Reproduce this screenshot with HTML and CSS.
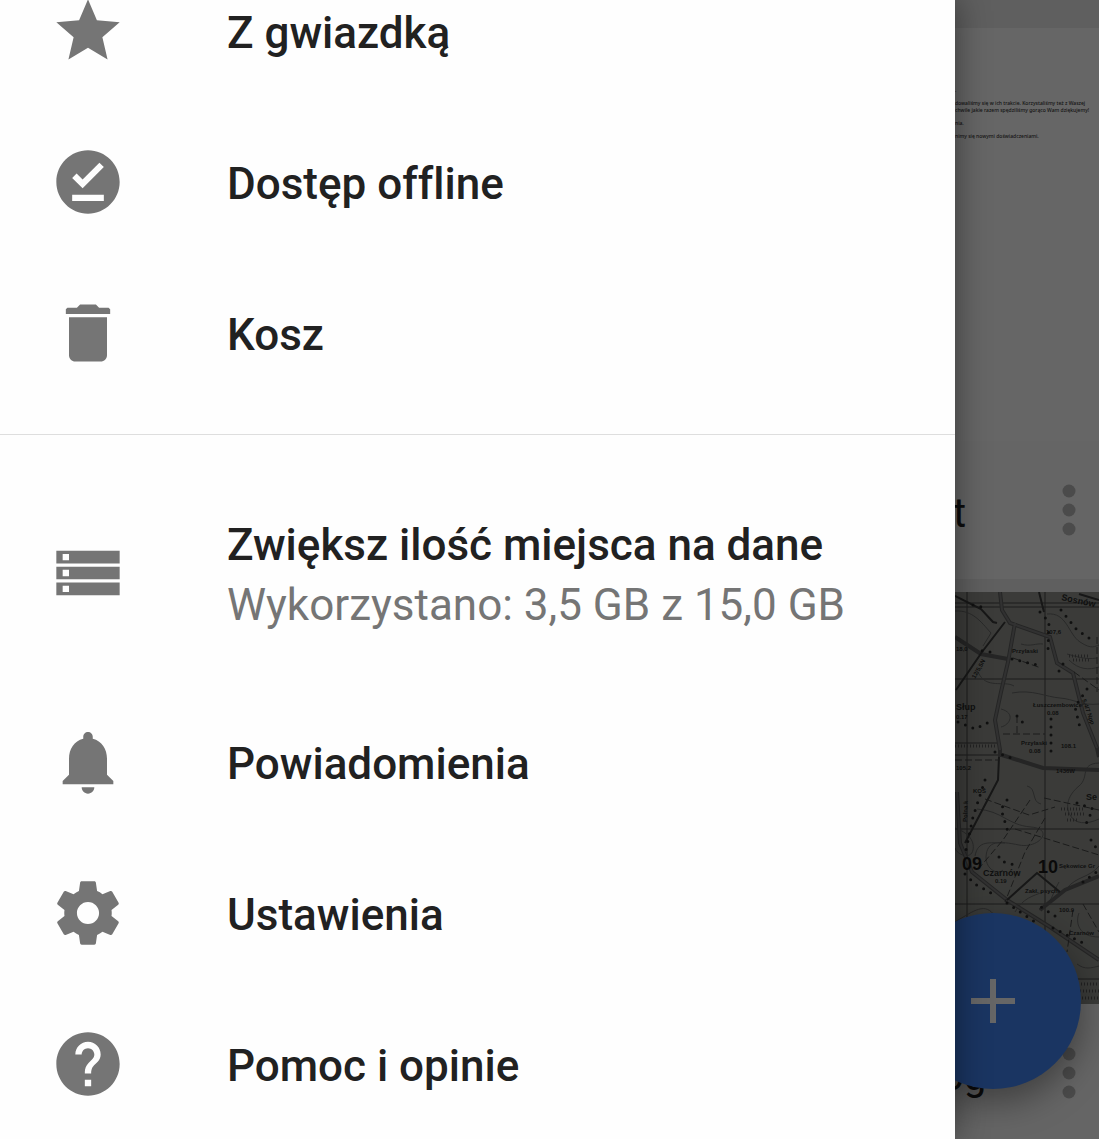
FILE: index.html
```html
<!DOCTYPE html>
<html lang="pl">
<head>
    <meta charset="utf-8">
    <meta name="viewport" content="width=device-width, initial-scale=1">
    <title>Menu</title>
    <link rel="stylesheet" href="styles.css">
</head>
<body>
    <nav class="drawer">
        <ul class="menu">
            <li>
                <a href="#" class="item">
                    <svg class="icon" viewBox="0 0 24 24"><path d="M12 17.27 18.18 21l-1.64-7.03L22 9.24l-7.19-.61L12 2 9.19 8.63 2 9.24l5.46 4.73L5.82 21z"/></svg>
                    <span class="label">Z gwiazdką</span>
                </a>
            </li>
            <li>
                <a href="#" class="item">
                    <svg class="icon" viewBox="0 0 24 24"><path d="M12 2C6.5 2 2 6.5 2 12s4.5 10 10 10 10-4.500 10-10S17.500 2 12 2zm5 16H7v-2h10v2zm-6.700-4L7 10.700l1.400-1.400 1.900 1.900 5.300-5.300L17 7.300 10.300 14z"/></svg>
                    <span class="label">Dostęp offline</span>
                </a>
            </li>
            <li>
                <a href="#" class="item">
                    <svg class="icon" viewBox="0 0 24 24"><path d="M6 19c0 1.100.9 2 2 2h8c1.100 0 2-.9 2-2V7H6v12zM18.500 4h-3l-1-1h-5l-1 1h-3l-.5.500V6h14V4.500z"/></svg>
                    <span class="label">Kosz</span>
                </a>
            </li>
        </ul>
        <ul class="menu more">
            <li>
                <a href="#" class="item storage">
                    <svg class="icon" viewBox="0 0 24 24"><path d="M2 19h20v-4H2v4zm2-3h2v2H4v-2zM2 5v4h20V5H2zm4 3H4V6h2v2zm-4 6h20v-4H2v4zm2-3h2v2H4v-2z"/></svg>
                    <span class="label">Zwiększ ilość miejsca na dane
                        <small class="usage">Wykorzystano: 3,5 GB z 15,0 GB</small>
                    </span>
                </a>
            </li>
            <li>
                <a href="#" class="item">
                    <svg class="icon" viewBox="0 0 24 24"><path d="M12 22c1.100 0 2-.9 2-2h-4c0 1.100.9 2 2 2zm6-6v-5c0-3.070-1.640-5.640-4.500-6.320V4c0-.83-.67-1.500-1.500-1.500s-1.500.67-1.500 1.500v.68C7.630 5.360 6 7.920 6 11v5l-2 2v1h16v-1l-2-2z"/></svg>
                    <span class="label">Powiadomienia</span>
                </a>
            </li>
            <li>
                <a href="#" class="item">
                    <svg class="icon" viewBox="0 0 24 24"><path d="M19.430 12.980c.04-.32.07-.64.07-.98s-.03-.66-.07-.98l2.110-1.650c.19-.15.24-.42.12-.64l-2-3.460c-.12-.22-.39-.3-.61-.22l-2.490 1c-.52-.4-1.080-.73-1.690-.98l-.38-2.650C14.460 2.180 14.250 2 14 2h-4c-.25 0-.46.18-.49.42l-.38 2.650c-.61.25-1.170.59-1.690.98l-2.490-1c-.23-.09-.49 0-.61.22l-2 3.460c-.13.22-.07.49.12.64l2.110 1.650c-.04.32-.07.65-.07.98s.03.66.07.98l-2.110 1.650c-.19.15-.24.42-.12.64l2 3.460c.12.22.39.3.61.22l2.490-1c.52.4 1.080.73 1.690.98l.38 2.650c.03.24.24.42.49.42h4c.25 0 .46-.18.49-.42l.38-2.650c.61-.25 1.170-.59 1.690-.98l2.490 1c.23.09.49 0 .61-.22l2-3.460c.12-.22.07-.49-.12-.64l-2.110-1.650zM12 15.500c-1.930 0-3.500-1.570-3.500-3.500s1.570-3.500 3.500-3.500 3.500 1.570 3.500 3.500-1.570 3.500-3.500 3.500z"/></svg>
                    <span class="label">Ustawienia</span>
                </a>
            </li>
            <li>
                <a href="#" class="item">
                    <svg class="icon" viewBox="0 0 24 24"><path d="M12 2C6.480 2 2 6.480 2 12s4.480 10 10 10 10-4.480 10-10S17.520 2 12 2zm1 17h-2v-2h2v2zm2.070-7.750-.9.92C13.450 12.900 13 13.500 13 15h-2v-.5c0-1.100.45-2.100 1.170-2.830l1.240-1.260c.37-.36.59-.86.59-1.410 0-1.100-.9-2-2-2s-2 .9-2 2H8c0-2.210 1.790-4 4-4s4 1.790 4 4c0 .88-.36 1.680-.93 2.250z"/></svg>
                    <span class="label">Pomoc i opinie</span>
                </a>
            </li>
        </ul>
    </nav>

    <main class="files">
        <article class="card">
            <div class="preview">
                <p>.</p>
                <p>dowaliśmy się w ich trakcie. Korzystaliśmy też z Waszej<br>chwile jakie razem spędziliśmy gorąco Wam dziękujemy!</p>
                <p>nia.</p>
                <p>nimy się nowymi doświadczeniami.</p>
            </div>
            <div class="caption">
                <span class="name">t</span>
                <button type="button" class="dots" aria-label="Więcej">
                    <svg viewBox="0 0 14 52"><circle cx="7" cy="7" r="6.500"/><circle cx="7" cy="26" r="6.500"/><circle cx="7" cy="45" r="6.500"/></svg>
                </button>
            </div>
        </article>
        <article class="card">
            <svg class="map" viewBox="0 0 144 412" preserveAspectRatio="xMinYMin slice">
                <!-- grid -->
                <g class="grid">
                    <path d="M12 0V412M90 0V340M0 11H144M0 15H144M0 87H144M0 151H42M0 163H44M0 237H144M0 312H144M100 387H144"/>
                </g>
                <!-- contours -->
                <g class="contour">
                    <path d="M92 22C112 20 113 42 125 50S140 54 144 53M0 19C18 18 26 30 36 41L28 54M66 52c10 3 15-1 22 0M57 101c20-4 34 4 48 5s22 8 39 6M23 80c8 18 26 8 36 14"/>
                    <path d="M46 117c15 4 9 16 0 18M144 171c-20 1-9 14-20 23s-14 20-9 29 16 10 29 4M22 217c26 2 30 16 54 18s8 22-12 18-32-5-33 12c0 13 12 18 17 13"/>
                    <path d="M0 236c12 4 20 12 18 22s-16 5-18-2M20 264c3-16 14-13 30-13M112 62c8 2 18 6 30 4M114 68c10 10 20 10 30 7M144 345c-20 0-24-14-20-24M96 408c12-20 20-10 24-28M122 372c8 6 14 4 22 2M60 320c8-14 18-16 28-20"/>
                    <path d="M104 290c-8 14-6 20-20 28M144 274c-10 12-22 10-32 22M0 330c20-12 30-20 40-6M72 194c10 2 4 16 14 18"/>
                </g>
                <!-- roads -->
                <g class="road">
                    <path d="M45 0 47 18 55 31 95 45 102 71 118 81 128 121 142 156 144 165"/>
                    <path d="M60 31 53 70 46 100 40 128 45 158V165"/>
                    <path d="M47 163 88 176 144 178M0 45 26 62 53 67"/>
                    <path d="M2 200 5 251 17 280 52 308 95 335 144 368M85 318 110 298 144 284"/>
                </g>
                <g class="roadcore">
                    <path d="M45 0 47 18 55 31 95 45 102 71 118 81 128 121 142 156M60 31 53 70 46 100 40 128 45 158M2 200 5 251 17 280 52 308 95 335 144 368"/>
                </g>
                <!-- railways and field paths -->
                <g class="rail">
                    <path d="M50 30 27 60 1 98M0 4 26 17 38 30 42 31M44 165 43 188 10 251M84 0 89 20M124 2 144 8"/>
                    <path d="M52 308 82 281 105 300"/>
                </g>
                <g class="dashed">
                    <path d="M0 168H44M30 207 74 223 100 215M75 208 48 248 25 275M48 142H90M62 124V142M58 66 86 76M119 80 144 98M142 45V100"/>
                    <path d="M89 206 144 218M60 237 144 263M118 318 112 360M128 312 144 340M90 226 70 260 50 310"/>
                </g>
                <!-- houses -->
                <g class="houses">
                    <path d="M40 160 62 168 M57 67 82 73 M62 124 70 133 M96 127 96 160"/>
                    <path d="M30 188 18 225 11 258 M35 60 22 58M3 130 20 137 34 130"/>
                    <path d="M44 265 46 269 60 273M52 311 80 330M98 336 130 352M10 282 20 292 38 302"/>
                    <path d="M106 18 122 38 140 50M132 97 120 115 126 140"/>
                    <path d="M85 20 94 30 93 58M108 72 104 79M122 211 138 217 130 234M136 248 144 260"/>
                    <path d="M52 208 46 217 53 240M128 290 144 278M100 324 86 315M18 13 31 16"/>
                </g>
                <g class="hatch">
                    <path d="M114 64H134M118 68H136M106 217H128M110 222H130M112 228H124M0 154H40M126 392H144M122 399H144M118 406H144"/>
                </g>
                <g class="places">
                    <text x="91" y="42">107,6</text>
                    <text x="57" y="61">Przylaski</text>
                    <text x="78" y="115">Łuszczembowice</text>
                    <text x="92" y="123">0.08</text>
                    <text x="66" y="153">Przylaski</text>
                    <text x="74" y="161">0.08</text>
                    <text x="106" y="156">108.1</text>
                    <text x="1" y="59">18,0</text>
                    <text x="1" y="127">0.17</text>
                    <text x="1" y="178">105.2</text>
                    <text x="18" y="201">KOŚ</text>
                    <text x="101" y="181">1436W</text>
                    <text x="40" y="291">0.19</text>
                    <text x="104" y="276">Sękowice Gr</text>
                    <text x="70" y="301">Zakł. psych.</text>
                    <text x="104" y="320">100.9</text>
                    <text x="114" y="343">Czarnów</text>
                    <text x="20" y="87" transform="rotate(-60 20 87)">12/5,5N</text>
                    <text x="127" y="108" transform="rotate(70 127 108)">5,4/7 Npp</text>
                    <text x="12" y="230" transform="rotate(-88 12 230)">Polna k</text>
                </g>
                <g class="towns">
                    <text x="1" y="118">Słup</text>
                    <text x="28" y="284">Czarnów</text>
                    <text x="131" y="208">Se</text>
                    <text x="106" y="8" transform="rotate(12 106 8)">Sosnów</text>
                </g>
                <g class="numbers">
                    <text x="7" y="278">09</text>
                    <text x="83" y="281">10</text>
                </g>
            </svg>
            <div class="caption">
                <span class="name long">og</span>
                <button type="button" class="dots" aria-label="Więcej">
                    <svg viewBox="0 0 14 52"><circle cx="7" cy="7" r="6.500"/><circle cx="7" cy="26" r="6.500"/><circle cx="7" cy="45" r="6.500"/></svg>
                </button>
            </div>
        </article>
        <button type="button" class="fab" aria-label="Dodaj">
            <svg viewBox="0 0 44 44"><path d="M19 0h6v19h19v6H25v19h-6V25H0v-6h19z"/></svg>
        </button>
    </main>
</body>
</html>
```

FILE: styles.css
```css
* {
    box-sizing: border-box;
}

body {
    display: flex;
    height: 100vh;
    margin: 0;
    overflow: hidden;
    font-family: Roboto, "Noto Sans", sans-serif;
    font-variant-ligatures: none;
    background-color: #fff;
}

/* drawer */
.drawer {
    flex: 1;
    z-index: 2;
    overflow: hidden;
    background-color: #fefefe;
    box-shadow: 0 0 32px rgba(0, 0, 0, 0.45);
}

.menu {
    margin: 0;
    padding: 0;
    list-style: none;
}

/* the list is scrolled, so the first row is cut by the top edge */
.menu:first-child {
    margin-top: -45px;
    padding-bottom: 26px;
}

.more {
    padding-top: 25px;
    border-top: 1px solid #dedede;
}

.item {
    display: flex;
    align-items: center;
    gap: 101px;
    height: 151px;
    padding-left: 50px;
    color: #212121;
    text-decoration: none;
}

.storage {
    height: 226px;
}

.icon {
    flex: none;
    width: 76px;
    height: 76px;
    fill: #757575;
}

.label {
    padding-top: 4px;
    font-size: 44px;
    font-weight: 500;
    line-height: 60px;
    white-space: nowrap;
}

.usage {
    display: block;
    font-size: 44px;
    font-weight: 400;
    color: #757575;
}

/* file list under the scrim */
.files {
    position: relative;
    width: 144px;
    padding-top: 28px;
    overflow: hidden;
    background-color: #eee;
}

.files::after {
    content: "";
    position: absolute;
    inset: 0;
    background-color: rgba(0, 0, 0, 0.6);
}

.card {
    margin-bottom: 13px;
    background-color: #fff;
}

.preview {
    height: 413px;
    padding-top: 59px;
    overflow: hidden;
    font-family: "Noto Sans", sans-serif;
    font-size: 5px;
    font-weight: 500;
    line-height: 7px;
    white-space: nowrap;
    color: #333;
}

.preview p {
    margin: 0 0 6px;
}

.caption {
    display: flex;
    align-items: center;
    justify-content: space-between;
    height: 138px;
    padding-right: 23px;
    background-color: #fcfcfc;
}

.name {
    margin-left: -2px;
    padding-top: 6px;
    font-size: 40px;
    color: #212121;
}

/* long names run out under the drawer */
.long {
    margin-left: -14px;
}

.dots {
    width: 14px;
    height: 52px;
    padding: 0;
    border: none;
    background: none;
}

.dots svg {
    display: block;
    fill: #bbb;
}

.fab {
    position: absolute;
    right: 18px;
    bottom: 50px;
    display: flex;
    align-items: center;
    justify-content: center;
    width: 176px;
    height: 176px;
    padding: 0;
    border: none;
    border-radius: 50%;
    background-color: #4285f4;
    box-shadow: 0 12px 36px rgba(0, 0, 0, 0.4);
}

.fab svg {
    width: 44px;
    height: 44px;
    fill: #fff;
}

/* map thumbnail */
.map {
    display: block;
    width: 100%;
    height: 412px;
    background-color: #93958f;
    fill: none;
}

.grid {
    stroke: #444;
}

.contour {
    stroke: #666;
}

.road {
    stroke: #5c5c5c;
    stroke-width: 4;
}

.roadcore {
    stroke: #7c7c7c;
    stroke-width: 2;
}

.rail {
    stroke: #3a3a3a;
    stroke-width: 2;
}

.dashed {
    stroke: #444;
    stroke-dasharray: 7 3;
}

.houses {
    stroke: #2a2a2a;
    stroke-width: 3;
    stroke-linecap: round;
    stroke-dasharray: 0 8;
}

.hatch {
    stroke: #555;
    stroke-width: 3;
    stroke-dasharray: 1 2;
}

.places,
.towns,
.numbers {
    font-family: "Liberation Sans", Arial, sans-serif;
    font-size: 6px;
    font-weight: bold;
    fill: #2a2a2a;
}

.towns {
    font-size: 9px;
}

.numbers {
    font-size: 18px;
    fill: #1a1a1a;
}
```
